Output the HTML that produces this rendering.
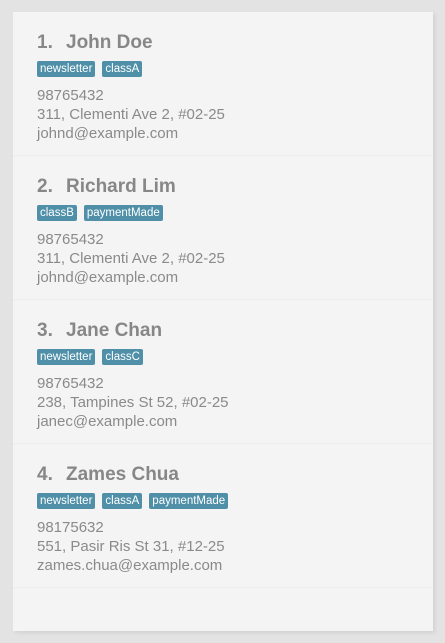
<!DOCTYPE html>
<html><head><style>
body{margin:0;width:445px;height:643px;background:#e3e3e3;font-family:"Segoe UI","Liberation Sans",sans-serif;overflow:hidden}
.panel{position:absolute;left:13px;top:12px;width:420px;height:619px;background:#f4f4f4;box-shadow:2px 2px 4px rgba(0,0,0,0.08)}
.card{height:143px;border-bottom:1px solid #ececec;position:relative}
.t{position:absolute;left:24px;top:20px;font-size:19px;font-weight:bold;color:#878787;white-space:nowrap}
.t span{display:inline-block;width:29px}
.tags{position:absolute;left:24px;top:49px;display:flex;gap:7px}
.tag{background:#4f8fa8;color:#fff;font-size:11.5px;height:16px;line-height:16px;padding:0 3px;border-radius:2px}
.d{position:absolute;left:24px;top:74px;font-size:15px;line-height:19px;color:#8a8a8a}
</style></head><body><div class="panel">
<div class="card"><div class="t"><span>1.</span>John Doe</div><div class="tags"><div class="tag">newsletter</div><div class="tag">classA</div></div><div class="d">98765432<br>311, Clementi Ave 2, #02-25<br>johnd@example.com</div></div>
<div class="card"><div class="t"><span>2.</span>Richard Lim</div><div class="tags"><div class="tag">classB</div><div class="tag">paymentMade</div></div><div class="d">98765432<br>311, Clementi Ave 2, #02-25<br>johnd@example.com</div></div>
<div class="card"><div class="t"><span>3.</span>Jane Chan</div><div class="tags"><div class="tag">newsletter</div><div class="tag">classC</div></div><div class="d">98765432<br>238, Tampines St 52, #02-25<br>janec@example.com</div></div>
<div class="card"><div class="t"><span>4.</span>Zames Chua</div><div class="tags"><div class="tag">newsletter</div><div class="tag">classA</div><div class="tag">paymentMade</div></div><div class="d">98175632<br>551, Pasir Ris St 31, #12-25<br>zames.chua@example.com</div></div>
</div></body></html>
